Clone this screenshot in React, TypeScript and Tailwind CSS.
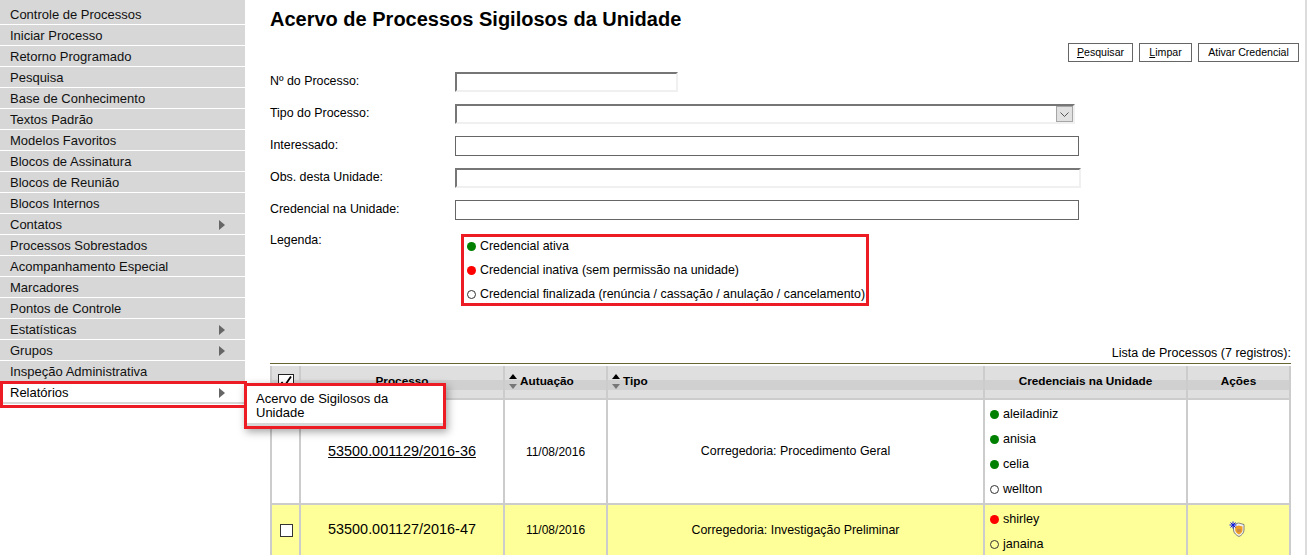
const menu = [
  { name: 'Controle de Processos' },
  { name: 'Iniciar Processo' },
  { name: 'Retorno Programado' },
  { name: 'Pesquisa' },
  { name: 'Base de Conhecimento' },
  { name: 'Textos Padrão' },
  { name: 'Modelos Favoritos' },
  { name: 'Blocos de Assinatura' },
  { name: 'Blocos de Reunião' },
  { name: 'Blocos Internos' },
  { name: 'Contatos', arrow: true },
  { name: 'Processos Sobrestados' },
  { name: 'Acompanhamento Especial' },
  { name: 'Marcadores' },
  { name: 'Pontos de Controle' },
  { name: 'Estatísticas', arrow: true },
  { name: 'Grupos', arrow: true },
  { name: 'Inspeção Administrativa' },
]

type Status = 'ativa' | 'inativa' | 'finalizada'

function Dot({ status }: { status: Status }) {
  if (status === 'ativa') return <span className="inline-block size-[9px] rounded-full bg-[#008000]" />
  if (status === 'inativa') return <span className="inline-block size-[9px] rounded-full bg-[#ff0000]" />
  return <span className="inline-block size-[9px] rounded-full border border-[#333]" />
}

function Arrow() {
  return <span className="h-0 w-0 border-y-[5px] border-l-[6px] border-y-transparent border-l-[#666]" />
}

function ShieldIcon() {
  return (
    <svg width="16" height="16" viewBox="0 0 16 16">
      <path d="M9.5 2 L15 3.5 V9 C15 12 12.5 14.5 10 15.5 C7.5 14.5 4.5 12 4.5 9 V3.5 Z" fill="#f2f2f2" stroke="#666" strokeWidth="0.8" />
      <path d="M9.8 4.5 L13.5 5.5 V9 C13.5 11 11.8 12.7 10 13.6 C8.2 12.7 6.2 11 6.2 9 V5.5 Z" fill="#ef9f26" />
      <path d="M8 8 H12 V11 H8 Z" fill="#cf8b45" />
      <path d="M4 0.5 V7.5 M0.5 4 H7.5 M1.5 1.5 L6.5 6.5 M6.5 1.5 L1.5 6.5" stroke="#0b14e8" strokeWidth="1" />
    </svg>
  )
}

function SortHeader({ label }: { label: string }) {
  return (
    <div className="flex h-full items-center gap-[3px] pl-[4px] text-[11.8px] font-bold">
      <span className="flex flex-col gap-[5px]">
        <span className="h-0 w-0 border-x-[4.5px] border-b-[5px] border-x-transparent border-b-black" />
        <span className="h-0 w-0 border-x-[4.5px] border-t-[5px] border-x-transparent border-t-[#777]" />
      </span>
      {label}
    </div>
  )
}

function HeaderCell({ children }: { children: React.ReactNode }) {
  return (
    <div className="relative h-[32px] bg-[#dfdfdf]">
      <div className="absolute inset-x-0 top-[14px] h-[10px] bg-[#d0d0d0]" />
      <div className="relative h-[31px]">{children}</div>
    </div>
  )
}

const inputInset = 'h-5 border-2 border-t-[#767676] border-l-[#767676] border-r-[#f0f0f0] border-b-[#f0f0f0]'
const inputPlain = 'h-5 border border-[#666]'
const labelClass = 'w-[185px] pb-[2px] leading-[18px]'

export default function App() {
  return (
    <div className="relative flex h-[555px] overflow-hidden bg-white font-['Liberation_Sans',Arial,sans-serif] text-[12.4px] text-black">
      <aside className="w-[245px] shrink-0 text-[13px]">
        <div className="bg-[#d7d7d7] pt-[4px]">
          {menu.map((item) => (
            <div key={item.name} className="flex h-[21px] items-center justify-between border-b border-white pt-[1px] pr-[20px] pl-[10px] text-[#111]">
              <span>{item.name}</span>
              {item.arrow && <Arrow />}
            </div>
          ))}
        </div>
        <div className="flex h-[22px] items-center justify-between border-b-2 border-[#d7d7d7] pt-[1px] pr-[20px] pl-[10px]">
          <span>Relatórios</span>
          <Arrow />
        </div>
      </aside>

      <main className="flex-1 border-r-2 border-[#dcdcdc] pr-[14px] pl-[25px]">
        <h1 className="mt-[7px] h-[24px] text-[20px] leading-[24px] font-bold">Acervo de Processos Sigilosos da Unidade</h1>

        <div className="mt-[12px] -mr-[8px] flex justify-end gap-[6px] text-[10.6px]">
          <button className="h-[19px] w-[65px] border border-[#666]"><u>P</u>esquisar</button>
          <button className="h-[19px] w-[53px] border border-[#666]"><u>L</u>impar</button>
          <button className="h-[19px] w-[101px] border border-[#666]">Ativar Credencial</button>
        </div>

        <div className="mt-[10px] flex flex-col gap-[12px]">
          <div className="flex items-center">
            <label className={labelClass}>Nº do Processo:</label>
            <div className={`w-[223px] ${inputInset}`} />
          </div>
          <div className="flex items-center">
            <label className={labelClass}>Tipo do Processo:</label>
            <div className={`flex w-[620px] justify-end ${inputInset}`}>
              <span className="flex w-[17px] items-center justify-center border border-[#a6a6a6] bg-[#e1e1e1]">
                <svg width="9" height="5" viewBox="0 0 9 5"><path d="M0.5 0.5 L4.5 4.5 L8.5 0.5" fill="none" stroke="#555" /></svg>
              </span>
            </div>
          </div>
          <div className="flex items-center">
            <label className={labelClass}>Interessado:</label>
            <div className={`w-[624px] ${inputPlain}`} />
          </div>
          <div className="flex items-center">
            <label className={labelClass}>Obs. desta Unidade:</label>
            <div className={`w-[626px] ${inputInset}`} />
          </div>
          <div className="flex items-center">
            <label className={labelClass}>Credencial na Unidade:</label>
            <div className={`w-[624px] ${inputPlain}`} />
          </div>
        </div>

        <div className="mt-[11px] flex">
          <span className="w-[185px] leading-[18px]">Legenda:</span>
          <div className="flex flex-col gap-[10px] pt-[8px] pl-[12px]">
            <div className="flex h-[14px] items-center gap-[4px]"><Dot status="ativa" />Credencial ativa</div>
            <div className="flex h-[14px] items-center gap-[4px]"><Dot status="inativa" />Credencial inativa (sem permissão na unidade)</div>
            <div className="flex h-[14px] items-center gap-[4px]"><Dot status="finalizada" />Credencial finalizada (renúncia / cassação / anulação / cancelamento)</div>
          </div>
        </div>

        <p className="mt-[45px] h-[15px] text-right text-[12.5px] leading-[15px]">Lista de Processos (7 registros):</p>

        <div className="mt-[2px] border-t border-[#666633] pt-[2px]">
          <div className="grid grid-cols-[27px_202px_101px_375px_201px_101px] gap-x-[2px] gap-y-[2px] bg-[#cccccc] px-[2px]">
            <HeaderCell>
              <div className="flex h-full items-center justify-center">
                <span className="flex size-[16px] items-center justify-center border border-[#222] bg-white">
                  <svg width="14" height="14" viewBox="0 0 14 14"><path d="M2.5 7 L5.5 11 L12 1.5" fill="none" stroke="#000" strokeWidth="1.8" /></svg>
                </span>
              </div>
            </HeaderCell>
            <HeaderCell><div className="flex h-full items-center justify-center text-[11.8px] font-bold">Processo</div></HeaderCell>
            <HeaderCell><SortHeader label="Autuação" /></HeaderCell>
            <HeaderCell><SortHeader label="Tipo" /></HeaderCell>
            <HeaderCell><div className="flex h-full items-center justify-center text-[11.8px] font-bold">Credenciais na Unidade</div></HeaderCell>
            <HeaderCell><div className="flex h-full items-center justify-center text-[11.8px] font-bold">Ações</div></HeaderCell>

            <div className="h-[103px] bg-white" />
            <div className="flex h-[103px] items-center justify-center bg-white text-[14.4px] underline">53500.001129/2016-36</div>
            <div className="flex items-center justify-center bg-white text-[12px]">11/08/2016</div>
            <div className="flex items-center justify-center bg-white">Corregedoria: Procedimento Geral</div>
            <div className="flex flex-col gap-[11px] bg-white pt-[7px] pl-[5px] text-[12.6px]">
              <div className="flex h-[14px] items-center gap-[4px]"><Dot status="ativa" />aleiladiniz</div>
              <div className="flex h-[14px] items-center gap-[4px]"><Dot status="ativa" />anisia</div>
              <div className="flex h-[14px] items-center gap-[4px]"><Dot status="ativa" />celia</div>
              <div className="flex h-[14px] items-center gap-[4px]"><Dot status="finalizada" />wellton</div>
            </div>
            <div className="bg-white" />

            <div className="flex h-[50px] items-center justify-center bg-[#ffff99]"><span className="ml-[1px] size-[13px] border border-[#333] bg-white" /></div>
            <div className="flex items-center justify-center bg-[#ffff99] text-[14.4px]">53500.001127/2016-47</div>
            <div className="flex items-center justify-center bg-[#ffff99] text-[12px]">11/08/2016</div>
            <div className="flex items-center justify-center bg-[#ffff99]">Corregedoria: Investigação Preliminar</div>
            <div className="flex flex-col gap-[11px] bg-[#ffff99] pt-[7px] pl-[5px] text-[12.6px]">
              <div className="flex h-[14px] items-center gap-[4px]"><Dot status="inativa" />shirley</div>
              <div className="flex h-[14px] items-center gap-[4px]"><Dot status="finalizada" />janaina</div>
            </div>
            <div className="flex items-start justify-center bg-[#ffff99] pt-[16px] pr-[3px]"><ShieldIcon /></div>
          </div>
        </div>
      </main>

      {/* popup do menu */}
      <div className="absolute top-[383px] left-[244px] h-[46px] w-[202px] bg-white text-[13px] shadow-[2px_3px_8px_rgba(0,0,0,0.35)]">
        <div className="absolute inset-x-[3px] bottom-[3px] h-[3px] bg-[#d7d7d7]" />
        <div className="pt-[9px] pl-[12px] leading-[14px]">Acervo de Sigilosos da<br />Unidade</div>
      </div>
      {/* marcacoes vermelhas */}
      <div className="absolute top-[381px] left-0 h-[27px] w-[247px] border-[3px] border-[#ed1c24]" />
      <div className="absolute top-[383px] left-[244px] h-[46px] w-[202px] border-[3px] border-[#ed1c24]" />
      <div className="absolute top-[234px] left-[461px] h-[72px] w-[408px] border-[3px] border-[#ed1c24]" />
    </div>
  )
}
